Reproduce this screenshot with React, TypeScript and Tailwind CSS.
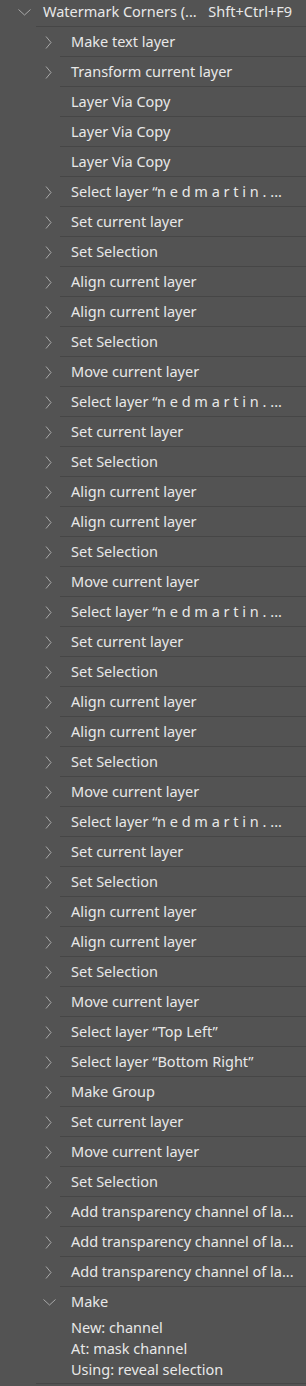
import React from 'react';

const steps: { label: string; expandable: boolean }[] = [
  { label: 'Make text layer', expandable: true },
  { label: 'Transform current layer', expandable: true },
  { label: 'Layer Via Copy', expandable: false },
  { label: 'Layer Via Copy', expandable: false },
  { label: 'Layer Via Copy', expandable: false },
  ...Array.from({ length: 4 }).flatMap(() => [
    { label: 'Select layer \u201Cn e d m a r t i n . ...', expandable: true },
    { label: 'Set current layer', expandable: true },
    { label: 'Set Selection', expandable: true },
    { label: 'Align current layer', expandable: true },
    { label: 'Align current layer', expandable: true },
    { label: 'Set Selection', expandable: true },
    { label: 'Move current layer', expandable: true },
  ]),
  { label: 'Select layer \u201CTop Left\u201D', expandable: true },
  { label: 'Select layer \u201CBottom Right\u201D', expandable: true },
  { label: 'Make Group', expandable: true },
  { label: 'Set current layer', expandable: true },
  { label: 'Move current layer', expandable: true },
  { label: 'Set Selection', expandable: true },
  { label: 'Add transparency channel of la...', expandable: true },
  { label: 'Add transparency channel of la...', expandable: true },
  { label: 'Add transparency channel of la...', expandable: true },
];

const ChevronRight = () => (
  <svg width="7" height="13" viewBox="0 0 7 13" fill="none">
    <path d="M1 0.5 L6 6.5 L1 12.5" stroke="#a9a9a9" strokeWidth="1" />
  </svg>
);

const ChevronDown = () => (
  <svg width="13" height="7" viewBox="0 0 13 7" fill="none">
    <path d="M0.5 0.5 L6.5 6 L12.5 0.5" stroke="#a9a9a9" strokeWidth="1" />
  </svg>
);

const App = () => {
  return (
    <div
      className="w-[306px] h-[1386px] bg-[#535353] text-[#e8e8e8] text-[14.5px] overflow-hidden"
      style={{ fontFamily: '"Noto Sans", "Open Sans", sans-serif' }}
    >
      {/* action set header */}
      <div className="flex h-[27px]">
        <div className="w-[36px] flex items-center justify-end pr-[5px] pb-[2px]">
          <ChevronDown />
        </div>
        <div className="flex-1 flex items-center justify-between pl-[7px] pr-[14px] border-b border-[#464646] pb-[2px]">
          <span>Watermark Corners (...</span>
          <span>Shft+Ctrl+F9</span>
        </div>
      </div>

      {steps.map((s, i) => (
        <div key={i} className="flex h-[30px]">
          <div className="w-[60px] flex items-center pl-[45px]">
            {s.expandable && <ChevronRight />}
          </div>
          <div className="flex-1 flex items-center pl-[11px] border-b border-[#464646]">
            <span className="whitespace-nowrap">{s.label}</span>
          </div>
        </div>
      ))}

      {/* expanded last step */}
      <div className="flex h-[30px]">
        <div className="w-[60px] flex items-center pl-[43px]">
          <ChevronDown />
        </div>
        <div className="flex-1 flex items-center pl-[11px]">
          <span>Make</span>
        </div>
      </div>
      <div className="ml-[36px] pl-[35px] pb-[3px] border-b border-[#464646] leading-[21px]">
        <div>New: channel</div>
        <div>At: mask channel</div>
        <div>Using: reveal selection</div>
      </div>
    </div>
  );
};

export default App;
